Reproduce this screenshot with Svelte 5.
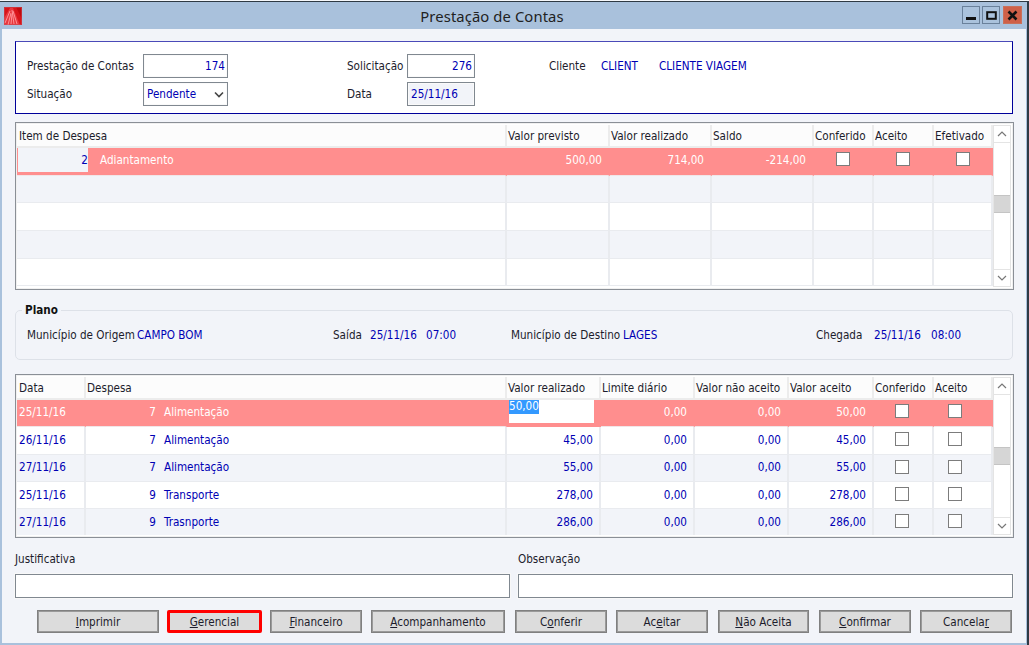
<script>
  const g1Heads = ['Item de Despesa','Valor previsto','Valor realizado','Saldo','Conferido','Aceito','Efetivado'];
  const g2Heads = ['Data','Despesa','Valor realizado','Limite diário','Valor não aceito','Valor aceito','Conferido','Aceito'];
  const g2Rows = [
    ['26/11/16','7','Alimentação','45,00','0,00','0,00','45,00'],
    ['27/11/16','7','Alimentação','55,00','0,00','0,00','55,00'],
    ['25/11/16','9','Transporte','278,00','0,00','0,00','278,00'],
    ['27/11/16','9','Trasnporte','286,00','0,00','0,00','286,00']
  ];
  const buttons = [
    ['', 'I', 'mprimir', 'b1'],
    ['', 'G', 'erencial', 'b2 hot'],
    ['', 'F', 'inanceiro', 'b3'],
    ['', 'A', 'companhamento', 'b4'],
    ['C', 'o', 'nferir', 'b5'],
    ['Ac', 'e', 'itar', 'b6'],
    ['', 'N', 'ão Aceita', 'b7'],
    ['', 'C', 'onfirmar', 'b8'],
    ['Cancela', 'r', '', 'b9']
  ];
</script>

{#snippet scrollbar(cls)}
  <div class="scroll {cls}">
    <div class="arrow">
      <svg width="10" height="6" viewBox="0 0 10 6"><path d="M1 5 L5 1 L9 5" fill="none" stroke="#777" stroke-width="1.2"/></svg>
    </div>
    <div class="thumb"></div>
    <div class="arrow bottom">
      <svg width="10" height="6" viewBox="0 0 10 6"><path d="M1 1 L5 5 L9 1" fill="none" stroke="#777" stroke-width="1.2"/></svg>
    </div>
  </div>
{/snippet}

<div class="win">
  <header class="title">
    <svg class="logo" width="18" height="18" viewBox="0 0 18 18">
      <rect width="18" height="18" fill="#d8141a"/>
      <path d="M0 18 L0 11 L6 1 L9 1 L16 18 Z" fill="#e8383e"/>
      <path d="M1 16 L6 4 M4 18 L7 6 M7 17 L8 7 M10 17 L8 3 M13 17 L9 4" stroke="#ff9096" stroke-width="1" fill="none"/>
      <path d="M12 0 L18 0 L18 12 Z" fill="#c00a0e"/>
      <rect x="0.5" y="0.5" width="17" height="17" fill="none" stroke="#c8505a" stroke-opacity="0.5"/>
    </svg>
    <span class="title-text">Prestação de Contas</span>
    <div class="winbtns">
      <div class="wb"><svg width="11" height="11" viewBox="0 0 11 11"><rect x="0" y="7" width="10" height="3" fill="#111"/></svg></div>
      <div class="wb"><svg width="11" height="11" viewBox="0 0 11 11"><rect x="1.2" y="2.2" width="8.6" height="6.6" fill="none" stroke="#111" stroke-width="2"/></svg></div>
      <div class="wb close"><svg width="11" height="11" viewBox="0 0 11 11"><path d="M1.5 1.5 L9.5 9.5 M9.5 1.5 L1.5 9.5" stroke="#111" stroke-width="2.6"/></svg></div>
    </div>
  </header>

  <main class="body">
    <section class="head">
      <div class="hrow r1">
        <span class="lab l1">Prestação de Contas</span>
        <div class="inp i1 num">174</div>
        <span class="lab l2">Solicitação</span>
        <div class="inp i2 num">276</div>
        <span class="lab l3">Cliente</span>
        <span class="val v1">CLIENT</span>
        <span class="val">CLIENTE VIAGEM</span>
      </div>
      <div class="hrow r2">
        <span class="lab l1">Situação</span>
        <div class="inp i1 sel">Pendente
          <svg width="10" height="7" viewBox="0 0 10 7"><path d="M1 1.5 L5 5.5 L9 1.5" fill="none" stroke="#444" stroke-width="1.6"/></svg>
        </div>
        <span class="lab l2">Data</span>
        <div class="inp i2 ro">25/11/16</div>
      </div>
    </section>

    <section class="grid g1">
      <div class="table">
        <div class="row hd">
          {#each g1Heads as h}<div class="c">{h}</div>{/each}
        </div>
        <div class="row sel-row">
          <div class="c first"><span class="idx">2</span><span class="nm">Adiantamento</span></div>
          <div class="c r">500,00</div><div class="c r">714,00</div><div class="c r">-214,00</div>
          <div class="c m"><i class="cb"></i></div><div class="c m"><i class="cb"></i></div><div class="c m"><i class="cb"></i></div>
        </div>
        {#each [0,1,2,3] as i}
          <div class="row blank" class:alt={i % 2 === 0}>
            {#each g1Heads as _}<div class="c"></div>{/each}
          </div>
        {/each}
      </div>
      {@render scrollbar('s1')}
    </section>

    <fieldset class="plano">
      <legend>Plano</legend>
      <div class="prow">
        <span class="p p1 lab">Município de Origem</span><span class="p p2 val">CAMPO BOM</span>
        <span class="p p3 lab">Saída</span><span class="p p4 val">25/11/16</span><span class="p p5 val">07:00</span>
        <span class="p p6 lab">Município de Destino</span><span class="p p7 val">LAGES</span>
        <span class="p p8 lab">Chegada</span><span class="p p9 val">25/11/16</span><span class="val">08:00</span>
      </div>
    </fieldset>

    <section class="grid g2">
      <div class="table">
        <div class="row hd">
          {#each g2Heads as h}<div class="c">{h}</div>{/each}
        </div>
        <div class="row sel-row">
          <div class="c">25/11/16</div>
          <div class="c desp"><span class="n">7</span><span>Alimentação</span></div>
          <div class="c edit"><div class="editor"><span class="hl">50,00</span></div></div>
          <div class="c r">0,00</div><div class="c r">0,00</div><div class="c r">50,00</div>
          <div class="c ck1"><i class="cb"></i></div><div class="c ck2"><i class="cb"></i></div>
        </div>
        {#each g2Rows as row, i}
          <div class="row data" class:alt={i % 2 === 1}>
            <div class="c">{row[0]}</div>
            <div class="c desp"><span class="n">{row[1]}</span><span>{row[2]}</span></div>
            <div class="c r">{row[3]}</div><div class="c r">{row[4]}</div><div class="c r">{row[5]}</div><div class="c r">{row[6]}</div>
            <div class="c ck1"><i class="cb"></i></div><div class="c ck2"><i class="cb"></i></div>
          </div>
        {/each}
      </div>
      {@render scrollbar('s2')}
    </section>

    <section class="notes">
      <div class="note"><label for="j">Justificativa</label><div id="j" class="box"></div></div>
      <div class="note"><label for="o">Observação</label><div id="o" class="box"></div></div>
    </section>

    <nav class="btns">
      {#each buttons as b}
        <button class={b[3]}>{b[0]}<u>{b[1]}</u>{b[2]}</button>
      {/each}
    </nav>
  </main>
</div>

<style>
  :global(body) { margin: 0; background: #f6f8fb; }
  .win {
    width: 1029px; height: 644px; margin-top: 1px; box-sizing: border-box;
    border-top: 1px solid #2f3a44;
    border-right: 2px solid #2f3a44;
    background: #a9c1dc;
    display: flex; flex-direction: column; overflow: hidden;
    font: 11.6px "DejaVu Sans Condensed", "DejaVu Sans", sans-serif;
    color: #1c1c2c;
  }
  .title { height: 27px; flex: none; position: relative; display: flex; align-items: center; justify-content: center; }
  .logo { position: absolute; left: 4px; top: 5px; }
  .title-text { font: 14.8px "Noto Sans", sans-serif; color: #222; letter-spacing: 0.1px; margin-left: -43px; margin-top: 1px; }
  .winbtns { position: absolute; left: 962px; top: 4px; display: flex; gap: 2px; }
  .wb { width: 18px; height: 18px; border: 1px solid #6a819b; display: flex; align-items: center; justify-content: center; background: #aac2dc; box-sizing: border-box; }
  .wb.close { background: #cf6048; border-color: #c9705a; width: 19px; margin-left: 1px; }

  .body { flex: 1; background: #f2f4f9; margin: 0 1px 2px 2px; padding: 12px 0 0 13px; box-sizing: border-box; }

  .head { width: 998px; height: 73px; box-sizing: border-box; background: #fff; border: 1px solid #00009a; border-top-color: #4a4ab8; padding-top: 12px; }
  .hrow { display: flex; align-items: center; height: 24px; }
  .r2 { margin-top: 4px; }
  .lab { color: #1c1c2c; white-space: nowrap; }
  .val { color: #0000b4; white-space: nowrap; }
  .l1 { width: 116px; margin-left: 11px; flex: none; }
  .l2 { width: 60px; margin-left: 119px; flex: none; }
  .l3 { width: 52px; margin-left: 74px; flex: none; }
  .v1 { width: 58px; flex: none; }
  .inp { height: 24px; box-sizing: border-box; border: 1px solid #808890; background: #fff; color: #0000b4; flex: none; padding: 0 2px 0 3px; display: flex; align-items: center; box-shadow: inset 0 0 0 1px #fafafa; }
  .i1 { width: 85px; }
  .i2 { width: 68px; }
  .num { justify-content: flex-end; }
  .sel { justify-content: space-between; padding-right: 3px; }
  .ro { background: #f2f4f9; }

  .grid { box-sizing: border-box; width: 999px; border: 1px solid #8a8f96; padding: 2px 2px 2px 1px; display: flex; background: #fff; box-shadow: inset 0 0 0 1px #f0f0f0; }
  .g1 { height: 168px; margin-top: 8px; }
  .g2 { height: 164px; margin-top: 14px; }
  .table { width: 976px; flex: none; overflow: hidden; }
  .row { display: grid; }
  .g1 .row { grid-template-columns: 490px 103px 102px 102px 60px 60px 59px; }
  .g2 .row { grid-template-columns: 69px 421px 94px 94px 94px 85px 60px 59px; }
  .c { box-sizing: border-box; display: flex; align-items: center; padding-left: 2px; padding-bottom: 1px; white-space: nowrap; overflow: hidden; border-right: 2px solid #e9ebef; border-bottom: 1px solid #e9ebef; }
  .hd { height: 23px; background: #fcfcfc; }
  .hd .c { border-right-color: #ececec; border-bottom: 2px solid #ececec; padding-bottom: 0; padding-left: 1px; }
  .hd .c:first-child { padding-left: 2px; }
  .g1 .row:not(.hd) { height: 27.7px; }
  .g2 .row:not(.hd) { height: 27.3px; }
  .blank { background: #fff; }
  .blank.alt { background: #f2f4f9; }
  .data { background: #fff; color: #0000b4; }
  .data.alt { background: #f2f4f9; }
  .r { justify-content: flex-end; padding-right: 6px; }
  .m { justify-content: center; padding: 0; }
  .sel-row { background: #ff8e8e; color: #fff; }
  .sel-row .c { border-color: #ff8e8e; border-bottom-color: #f0e6e8; padding-bottom: 3px; }
  .first { padding: 0 0 0 1px; }
  .idx { width: 70px; height: 24px; box-sizing: border-box; background: #f2f4f9; color: #0000b4; display: flex; align-items: center; justify-content: flex-end; flex: none; }
  .nm { margin-left: 12px; }
  .desp { padding-left: 0; }
  .desp .n { width: 70px; text-align: right; margin-right: 8px; flex: none; }
  .edit { padding: 0 0 0 2px; align-items: flex-start; border: 0 !important; }
  .editor { width: 85px; height: 23px; background: #fff; color: #0000b4; line-height: 13px; }
  .hl { background: #3399ff; color: #fff; display: inline-block; height: 14px; }
  .ck1 { padding-left: 21px; }
  .ck2 { padding-left: 14px; }
  .cb { display: block; width: 14px; height: 14px; box-sizing: border-box; background: #fff; border: 1px solid #7c7c7c; margin-bottom: 1px; }

  .scroll { width: 18px; flex: none; border: 1px solid #e4e4e4; box-sizing: border-box; display: flex; flex-direction: column; position: relative; background: #fff; }
  .arrow { height: 17px; display: flex; align-items: center; justify-content: center; flex: none; border-bottom: 1px solid #e4e4e4; box-sizing: border-box; }
  .arrow.bottom { margin-top: auto; border-bottom: 0; border-top: 1px solid #e4e4e4; }
  .thumb { position: absolute; left: 0; right: 0; height: 18px; background: #d6d6d6; border-top: 1px solid #c4c4c4; border-bottom: 1px solid #c4c4c4; box-sizing: border-box; }
  .s1 .thumb { top: 69px; }
  .s2 .thumb { top: 69px; }

  .plano { width: 998px; height: 57px; box-sizing: border-box; margin: 13px 0 0 0; border: 1px solid #dde1e8; border-radius: 5px; padding: 0; min-width: 0; }
  legend { font-weight: bold; padding: 0 3px; margin-left: 6px; color: #111; line-height: 14px; }
  .prow { display: flex; align-items: center; height: 14px; margin-top: 11px; }
  .p { flex: none; }
  .p1 { margin-left: 11px; width: 110px; }
  .p2 { width: 196px; }
  .p3 { width: 37px; }
  .p4 { width: 56px; }
  .p5 { width: 85px; }
  .p6 { width: 112px; }
  .p7 { width: 193px; }
  .p8 { width: 58px; }
  .p9 { width: 57px; }

  .notes { display: flex; gap: 8px; width: 998px; margin-top: 13px; }
  .note { flex: 1; display: flex; flex-direction: column; }
  .note label { height: 16px; line-height: 16px; }
  .box { height: 24px; margin-top: 7px; background: #fff; border: 1px solid #808890; box-sizing: border-box; box-shadow: 0 0 0 1px #f8f8f8; }

  .btns { display: flex; margin: 12px 0 0 22px; }
  button { font: inherit; color: #1c1c2c; height: 23px; padding: 0; background: #dcdcdc; border: 1px solid #808080; box-shadow: inset 0 0 0 1px #9a9a9a; box-sizing: border-box; flex: none; }
  .b1 { width: 122px; margin-right: 8px; }
  .b2 { width: 95px; margin-right: 8px; }
  .b3 { width: 92px; margin-right: 9px; }
  .b4 { width: 134px; margin-right: 10px; }
  .b5 { width: 92px; margin-right: 9px; }
  .b6 { width: 92px; margin-right: 10px; }
  .b7 { width: 91px; margin-right: 10px; }
  .b8 { width: 92px; margin-right: 9px; }
  .b9 { width: 92px; }
  .hot { border: 3px solid #f00; border-radius: 2px; box-shadow: none; }
</style>
